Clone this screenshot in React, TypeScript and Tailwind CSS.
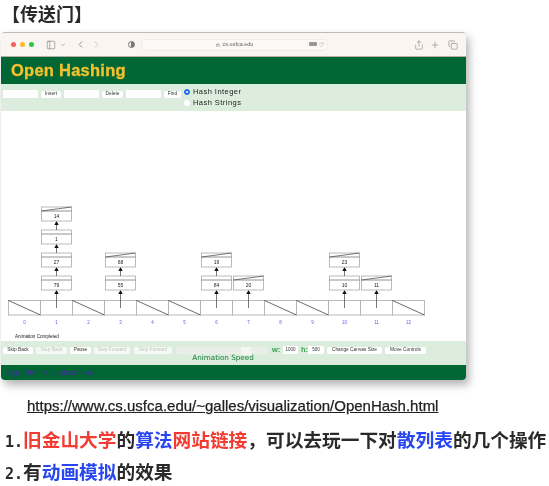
import React from 'react';
import { ChevronDown, ChevronLeft, ChevronRight, Copy, Lock, PanelLeft, Plus, RotateCw, Share } from 'lucide-react';

const CELL_W = 32;
const CELL_X = 8.5;
const NODE_Y = [275, 252, 229, 206];
const CHAINS: Record<number, number[]> = { 1: [79, 27, 1, 14], 3: [55, 68], 6: [84, 19], 7: [20], 10: [10, 23], 11: [11] };

const Arrow = ({ x, y1, y2 }: { x: number; y1: number; y2: number }) => (
  <g>
    <line x1={x} y1={y1} x2={x} y2={y2 + 3} stroke="#555" strokeWidth="0.8" />
    <polygon points={`${x},${y2} ${x - 2.2},${y2 + 4} ${x + 2.2},${y2 + 4}`} fill="#111" />
  </g>
);

const HashDiagram = () => (
  <svg width="465" height="230" viewBox="1 110 465 230" className="block">
    {Array.from({ length: 13 }, (_, i) => {
      const x = CELL_X + i * CELL_W;
      const chain = CHAINS[i];
      return (
        <g key={i}>
          <rect x={x} y="299.5" width={CELL_W} height="14.5" fill="#fff" stroke="#aaa" strokeWidth="0.8" />
          {!chain && <line x1={x} y1="299.5" x2={x + CELL_W} y2="314" stroke="#444" strokeWidth="0.8" />}
          <text x={x + 16} y="323" textAnchor="middle" fontSize="4.5" fill="#5a5aff" fontFamily="Liberation Sans, sans-serif">{i}</text>
          {chain && <Arrow x={x + 16} y1={307} y2={289} />}
          {chain?.map((value, j) => {
            const y = NODE_Y[j];
            const nx = x + 1;
            const last = j === chain.length - 1;
            return (
              <g key={value}>
                <rect x={nx} y={y} width="30" height="14" fill="#fff" stroke="#aaa" strokeWidth="0.8" />
                <line x1={nx} y1={y + 4} x2={nx + 30} y2={y + 4} stroke="#777" strokeWidth="0.8" />
                {last && <line x1={nx} y1={y + 4} x2={nx + 30} y2={y} stroke="#555" strokeWidth="0.8" />}
                <text x={nx + 15} y={y + 10.5} textAnchor="middle" fontSize="5" fill="#222" fontFamily="Liberation Sans, sans-serif">{value}</text>
                {!last && <Arrow x={x + 16} y1={y} y2={NODE_Y[j + 1] + 14} />}
              </g>
            );
          })}
        </g>
      );
    })}
    <text x="15" y="336.5" fontSize="4.6" fill="#222" fontFamily="Liberation Sans, sans-serif">Animation Completed</text>
  </svg>
);

const Btn = ({ label, w, off }: { label: string; w: string; off?: boolean }) => (
  <div className={`${w} h-[7px] shrink-0 rounded-[2px] bg-white flex items-center justify-center text-[4.8px] leading-none whitespace-nowrap ${off ? 'text-[#b5b5b5] opacity-70' : 'text-[#333]'}`}>{label}</div>
);

const Field = ({ w, value }: { w: string; value?: string }) => (
  <div className={`${w} h-[8px] shrink-0 bg-white flex items-center justify-center text-[4.5px] leading-none text-[#333]`}>{value}</div>
);

export default function App() {
  return (
    <div className="w-[549px] h-[486px] overflow-hidden bg-white text-[#222] blur-[0.4px] font-['Liberation_Sans','Noto_Sans_CJK_SC',sans-serif]">
      <h1 className="pt-[1px] pl-[2px] h-[32px] text-[18px] leading-[24px] font-bold text-[#2a2a2a] font-['Noto_Sans_CJK_SC',sans-serif]">【传送门】</h1>

      <div className="ml-[1px] w-[465px] h-[348px] rounded-[4px] overflow-hidden flex flex-col bg-white border-t border-[#bbb] shadow-[3px_5px_9px_rgba(0,0,0,0.3)]">
        <div className="h-[24px] shrink-0 bg-[#fbf5f1] border-b border-[#b5b0a5] flex items-center text-[#777]">
          <div className="ml-[10px] flex gap-[4px]">
            <span className="w-[5px] h-[5px] rounded-full bg-[#fb5f57]" />
            <span className="w-[5px] h-[5px] rounded-full bg-[#fcb92e]" />
            <span className="w-[5px] h-[5px] rounded-full bg-[#29c840]" />
          </div>
          <PanelLeft size={10} strokeWidth={1.4} className="ml-[12px]" />
          <ChevronDown size={6} strokeWidth={2} className="ml-[4px]" />
          <ChevronLeft size={11} strokeWidth={1.6} className="ml-[9px]" />
          <ChevronRight size={11} strokeWidth={1.6} className="ml-[5px] text-[#bbb]" />
          <div className="ml-[26px] w-[7px] h-[7px] rounded-full border border-[#777] bg-[linear-gradient(90deg,#fbf5f1_50%,#777_50%)]" />
          <div className="ml-[6px] w-[187px] h-[12px] rounded-[4px] border border-[#f0ebe6] bg-[#fcf8f5] flex items-center relative">
            <div className="w-full flex items-center justify-center gap-[3px] text-[5.5px] leading-none text-[#666]">
              <Lock size={4} strokeWidth={2} />
              <span>cs.usfca.edu</span>
            </div>
            <div className="absolute right-[3px] top-[2px] flex items-center gap-[2px] text-[#999]">
              <span className="w-[8px] h-[4px] rounded-[1px] bg-[#999]" />
              <RotateCw size={5} strokeWidth={1.6} />
            </div>
          </div>
          <Share size={10} strokeWidth={1.3} className="ml-[86px]" />
          <Plus size={10} strokeWidth={1.3} className="ml-[6px]" />
          <Copy size={10} strokeWidth={1.3} className="ml-[8px]" />
        </div>

        <div className="h-[27px] shrink-0 bg-[#006633] flex items-center pl-[10px] text-[16.5px] font-bold tracking-[0.25px] [-webkit-text-stroke:0.3px_#f5c22e] text-[#f5c22e]">Open Hashing</div>

        <div className="h-[27px] shrink-0 bg-[#dcedde] flex pl-[2px] relative">
          <div className="flex items-center gap-[3px] h-[8px] mt-[6px]">
            <Field w="w-[35px]" />
            <Btn label="Insert" w="w-[20px]" />
            <Field w="w-[35px]" />
            <Btn label="Delete" w="w-[21px]" />
            <Field w="w-[35px]" />
            <Btn label="Find" w="w-[17px]" />
          </div>
          <div className="ml-[3px] mt-[3px] flex flex-col gap-[1px] text-[7.5px] leading-[10px] tracking-[0.45px] text-[#222]">
            <label className="flex items-center gap-[3px]">
              <span className="w-[6px] h-[6px] rounded-full bg-[#1f6fe8] border-[1.5px] border-[#1f6fe8] flex items-center justify-center"><span className="w-[2px] h-[2px] rounded-full bg-white" /></span>
              Hash Integer
            </label>
            <label className="flex items-center gap-[3px]">
              <span className="w-[6px] h-[6px] rounded-full bg-white" />
              Hash Strings
            </label>
          </div>
        </div>

        <div className="h-[230px] shrink-0 bg-white">
          <HashDiagram />
        </div>

        <div className="h-[24px] shrink-0 bg-[#dcedde] pl-[2px] pt-[5px]">
          <div className="flex items-center h-[8px]">
            <Btn label="Skip Back" w="w-[30px]" />
            <span className="w-[3px]" />
            <Btn label="Step Back" w="w-[31px]" off />
            <span className="w-[3px]" />
            <Btn label="Pause" w="w-[21px]" />
            <span className="w-[3px]" />
            <Btn label="Step Forward" w="w-[36px]" off />
            <span className="w-[4px]" />
            <Btn label="Skip Forward" w="w-[38px]" off />
            <div className="ml-[4px] w-[92px] h-[7px] rounded-[2px] bg-[#e9efe8] flex">
              <span className="ml-[65px] w-[10px] h-[8px] bg-[#f4f6f3]" />
            </div>
            <span className="ml-[4px] w-[8px] text-[7.5px] font-bold text-[#35a04f]">w:</span>
            <span className="w-[3px]" />
            <Field w="w-[15px]" value="1000" />
            <span className="ml-[3px] w-[6px] mr-[1px] text-[7.5px] font-bold text-[#35a04f]">h:</span>
            <Field w="w-[16px]" value="500" />
            <span className="w-[3px]" />
            <Btn label="Change Canvas Size" w="w-[55px]" />
            <span className="w-[3px]" />
            <Btn label="Move Controls" w="w-[41px]" />
          </div>
          <div className="ml-[188px] -mt-[1px] w-[64px] text-center whitespace-nowrap text-[7.2px] leading-[10px] text-[#0f7a33] font-['DejaVu_Sans',sans-serif]">Animation Speed</div>
        </div>

        <div className="flex-1 bg-[#006633] flex items-center pl-[5px] text-[7.6px] tracking-[0.3px] text-[#3f2f9a]">Algorithm Visualizations</div>
      </div>

      <div className="mt-[18px] ml-[27px] h-[16px] text-[15px] leading-[16px] [-webkit-text-stroke:0.25px_#222] text-[#222] underline whitespace-nowrap">https://www.cs.usfca.edu/~galles/visualization/OpenHash.html</div>

      <div className="mt-[12px] ml-[5px] flex flex-col gap-[3px] text-[18.7px] leading-[25px] font-bold whitespace-nowrap text-[#2a2a2a] font-['Noto_Sans_CJK_SC',sans-serif]">
        <p>
          <span className="font-['DejaVu_Sans_Mono',monospace] text-[15px]">1.</span>
          <span className="text-[#f23b32]">旧金山大学</span>的<span className="text-[#2846f0]">算法</span><span className="text-[#f23b32]">网站链接</span>，可以去玩一下对<span className="text-[#2846f0]">散列表</span>的几个操作
        </p>
        <p>
          <span className="font-['DejaVu_Sans_Mono',monospace] text-[15px]">2.</span>
          有<span className="text-[#2846f0]">动画模拟</span>的效果
        </p>
      </div>
    </div>
  );
}
